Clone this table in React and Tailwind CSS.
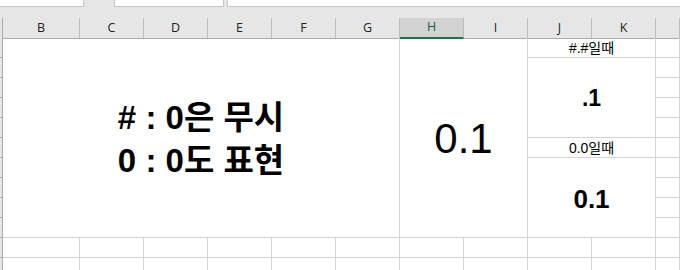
import React from 'react';

const colStart = ['', 'col-start-1', 'col-start-2', 'col-start-3', 'col-start-4', 'col-start-5', 'col-start-6', 'col-start-7', 'col-start-8', 'col-start-9', 'col-start-10', 'col-start-11', 'col-start-12'];
const rowStart = ['', 'row-start-1', 'row-start-2', 'row-start-3', 'row-start-4', 'row-start-5', 'row-start-6', 'row-start-7', 'row-start-8', 'row-start-9', 'row-start-10', 'row-start-11', 'row-start-12'];

const letters = ['B', 'C', 'D', 'E', 'F', 'G', 'H', 'I', 'J', 'K', ''];
const rows = [1, 2, 3, 4, 5, 6, 7, 8, 9, 10, 11, 12];
const gridCols = 'grid grid-cols-[3px_77px_64px_64px_64px_64px_64px_64px_64px_64px_64px_1fr]';
const cell = 'border-r border-b border-[#d4d4d4]';
const latinKo = "font-['Liberation_Sans','Noto_Sans_CJK_KR',sans-serif]";

export default function App() {
  return (
    <div className="w-[680px] h-[270px] overflow-hidden bg-white text-black">
      {/* top bar */}
      <div className="flex h-[18px] items-start bg-[#e6e6e6]">
        <div className="h-[7px] w-[84px] border-r border-b border-[#c6c6c6] bg-white" />
        <div className="w-[30px]" />
        <div className="h-[7px] w-[110px] border-x border-b border-[#c6c6c6] bg-white" />
        <div className="w-[3px]" />
        <div className="h-[7px] flex-1 border-l border-b border-[#c6c6c6] bg-white" />
      </div>

      {/* column header */}
      <div className={`${gridCols} h-[20px] bg-[#e6e6e6] font-['Open_Sans',sans-serif] text-[12.5px] text-[#222]`}>
        <div className="border-r border-b border-[#ababab]" />
        {letters.map((l) =>
          l === 'H' ? (
            <div key={l} className="flex items-center justify-center border-r border-b-2 border-r-[#bcbcbc] border-b-[#217346] bg-[#d2d2d2] text-[#1e5e3a]">
              {l}
            </div>
          ) : (
            <div key={l || 'L'} className="flex items-center justify-center border-r border-b border-r-[#bcbcbc] border-b-[#ababab]">
              {l}
            </div>
          )
        )}
      </div>

      {/* body */}
      <div className={`${gridCols} auto-rows-[20px]`}>
        {rows.map((r) => (
          <div key={'rh' + r} className={`${colStart[1]} ${rowStart[r]} border-r border-b border-[#ababab] bg-[#e6e6e6]`} />
        ))}

        <div className={`col-start-2 col-span-6 row-start-1 row-span-10 ${cell} flex flex-col items-center justify-center ${latinKo} text-[33px] font-bold leading-[43px]`}>
          <div className="pt-[2px]">#&nbsp;:&nbsp;0은 무시</div>
          <div>0&nbsp;:&nbsp;0도 표현</div>
        </div>

        <div className={`col-start-8 col-span-2 row-start-1 row-span-10 ${cell} flex items-center justify-center font-['Liberation_Sans',sans-serif] text-[42px] leading-none pt-[2px]`}>
          0.1
        </div>

        <div className={`col-start-10 col-span-2 row-start-1 ${cell} flex items-center justify-center ${latinKo} text-[14px] leading-none`}>
          #.#일때
        </div>
        <div className={`col-start-10 col-span-2 row-start-2 row-span-4 ${cell} flex items-center justify-center font-['Liberation_Sans',sans-serif] text-[23px] font-bold leading-none pt-[2px]`}>
          .1
        </div>
        <div className={`col-start-10 col-span-2 row-start-6 ${cell} flex items-center justify-center ${latinKo} text-[14px] leading-none`}>
          0.0일때
        </div>
        <div className={`col-start-10 col-span-2 row-start-7 row-span-4 ${cell} flex items-center justify-center font-['Liberation_Sans',sans-serif] text-[26px] font-bold leading-none pt-[2px]`}>
          0.1
        </div>

        {rows.map((r) => (
          <div key={'L' + r} className={`${colStart[12]} ${rowStart[r]} ${cell}`} />
        ))}

        {[11, 12].map((r) =>
          [2, 3, 4, 5, 6, 7, 8, 9, 10, 11].map((c) => (
            <div key={r + '-' + c} className={`${colStart[c]} ${rowStart[r]} ${cell}`} />
          ))
        )}
      </div>
    </div>
  );
}
